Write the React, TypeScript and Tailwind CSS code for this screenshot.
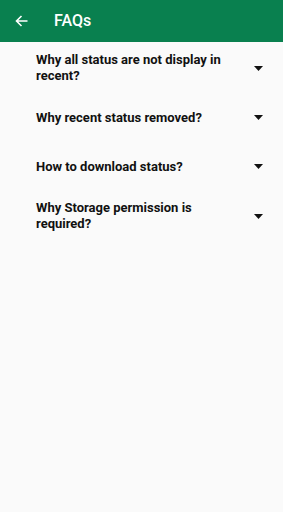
import React from "react";

const items = [
  "Why all status are not display in recent?",
  "Why recent status removed?",
  "How to download status?",
  "Why Storage permission is required?",
];

export default function App() {
  return (
    <div className="w-[283px] h-[512px] bg-[#fafafa] flex flex-col" style={{ fontFamily: "Roboto, sans-serif" }}>
      <div className="h-[42px] bg-[#09804f] flex items-center shrink-0">
        <svg className="ml-[15px]" width="13" height="12" viewBox="0 0 13 12" fill="none">
          <path d="M12.5 6H1.5M6.5 1L1.5 6L6.5 11" stroke="white" strokeWidth="1.6" />
        </svg>
        <span className="ml-[26px] text-white text-[16px] font-medium">FAQs</span>
      </div>
      <div className="flex flex-col pt-px">
        {items.map((q) => (
          <div key={q} className="min-h-[49px] py-[9px] flex items-center pl-[36px] pr-[20px]">
            <div className="w-[200px] text-[13px] font-bold leading-[16px] text-[#111]">{q}</div>
            <div className="flex-1" />
            <svg width="9" height="5" viewBox="0 0 9 5">
              <path d="M0 0H9L4.5 5Z" fill="#111" />
            </svg>
          </div>
        ))}
      </div>
    </div>
  );
}
